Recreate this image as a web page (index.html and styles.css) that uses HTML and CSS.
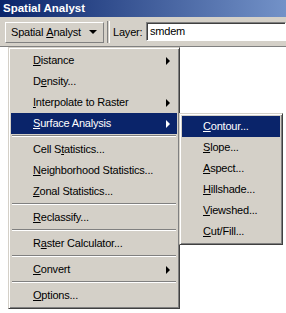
FILE: index.html
```html
<!DOCTYPE html>
<html lang="en">
<head>
    <meta charset="UTF-8">
    <title>Spatial Analyst</title>
    <link rel="stylesheet" href="styles.css">
</head>
<body>
    <div class="titlebar">Spatial Analyst</div>

    <div class="toolbar">
        <div class="tool-button">
            Spatial <u>A</u>nalyst
            <span class="drop-arrow"></span>
        </div>
        <div class="tool-sep"></div>
        <label class="layer-label">Layer:</label>
        <div class="layer-input">smdem</div>
    </div>

    <div class="workspace">
        <div class="menu">
            <div class="menu-item has-sub"><u>D</u>istance<span class="sub-arrow"></span></div>
            <div class="menu-item">D<u>e</u>nsity...</div>
            <div class="menu-item has-sub"><u>I</u>nterpolate to Raster<span class="sub-arrow"></span></div>
            <div class="menu-item has-sub active">
                <u>S</u>urface Analysis<span class="sub-arrow"></span>
                <div class="menu submenu">
                    <div class="menu-item active"><u>C</u>ontour...</div>
                    <div class="menu-item"><u>S</u>lope...</div>
                    <div class="menu-item"><u>A</u>spect...</div>
                    <div class="menu-item"><u>H</u>illshade...</div>
                    <div class="menu-item"><u>V</u>iewshed...</div>
                    <div class="menu-item"><u>C</u>ut/Fill...</div>
                </div>
            </div>
            <div class="menu-sep"></div>
            <div class="menu-item">Cell S<u>t</u>atistics...</div>
            <div class="menu-item"><u>N</u>eighborhood Statistics...</div>
            <div class="menu-item"><u>Z</u>onal Statistics...</div>
            <div class="menu-sep"></div>
            <div class="menu-item"><u>R</u>eclassify...</div>
            <div class="menu-sep"></div>
            <div class="menu-item">R<u>a</u>ster Calculator...</div>
            <div class="menu-sep"></div>
            <div class="menu-item has-sub"><u>C</u>onvert<span class="sub-arrow"></span></div>
            <div class="menu-sep"></div>
            <div class="menu-item"><u>O</u>ptions...</div>
        </div>
    </div>
</body>
</html>
```

FILE: styles.css
```css
body {
    margin: 0;
    background: white;
    font-family: "Liberation Sans", Arial, sans-serif;
    font-size: 11px;
    letter-spacing: -0.2px;
    color: #000;
    width: 286px;
    height: 313px;
    overflow: hidden;
}
u {
    text-decoration: underline;
    text-underline-offset: 1px;
}
.titlebar {
    height: 17px;
    line-height: 17px;
    padding-left: 3px;
    background: linear-gradient(to right, #0a246a, #7392c8);
    color: white;
    font-weight: bold;
    font-size: 11.5px;
    letter-spacing: 0;
}
.toolbar {
    height: 29px;
    background-color: #d4d0c8;
    border-bottom: 1px solid #808080;
    display: flex;
    align-items: center;
    padding-left: 5px;
}
.tool-button {
    box-sizing: border-box;
    width: 99px;
    height: 21px;
    margin-top: 1px;
    display: flex;
    align-items: center;
    padding-left: 5px;
    border: 1px solid;
    border-color: #fff #808080 #808080 #fff;
}
.tool-button u {
    margin: 0 0 0 3px;
}
.drop-arrow {
    margin-left: 8px;
    border-top: 4px solid #000;
    border-left: 4px solid transparent;
    border-right: 4px solid transparent;
}
.tool-sep {
    width: 1px;
    height: 22px;
    margin: 0 3px 0 3px;
    border-left: 1px solid #808080;
    border-right: 1px solid #fff;
}
.layer-label {
    width: 32px;
}
.layer-input {
    flex: 1;
    box-sizing: border-box;
    height: 19px;
    line-height: 17px;
    padding-left: 3px;
    margin-left: 1px;
    background: white;
    border: 1px solid;
    border-color: #808080 #fff #fff #808080;
    box-shadow: inset 1px 1px #404040;
}
.workspace {
    position: relative;
}
.menu {
    position: absolute;
    left: 8px;
    top: 0;
    width: 172px;
    box-sizing: border-box;
    padding: 2px;
    background-color: #d4d0c8;
    border: 1px solid;
    border-color: #d4d0c8 #404040 #404040 #d4d0c8;
    box-shadow: inset 1px 1px #fff, inset -1px -1px #808080;
}
.menu-item {
    position: relative;
    height: 21px;
    line-height: 21px;
    padding-left: 22px;
    white-space: nowrap;
}
.menu-item.active {
    background-color: #0a246a;
    color: white;
}
.sub-arrow {
    position: absolute;
    right: 7px;
    top: 7px;
    border-left: 4px solid #000;
    border-top: 4px solid transparent;
    border-bottom: 4px solid transparent;
}
.menu-item.active > .sub-arrow {
    border-left-color: white;
}
.menu-sep {
    height: 0;
    margin: 1px 1px 2px 1px;
    border-top: 1px solid #808080;
    border-bottom: 1px solid #fff;
}
.submenu {
    left: calc(100% + 2px);
    top: 0;
    width: 104px;
    color: #000;
}
.submenu .menu-item {
    padding-left: 21px;
}
```
